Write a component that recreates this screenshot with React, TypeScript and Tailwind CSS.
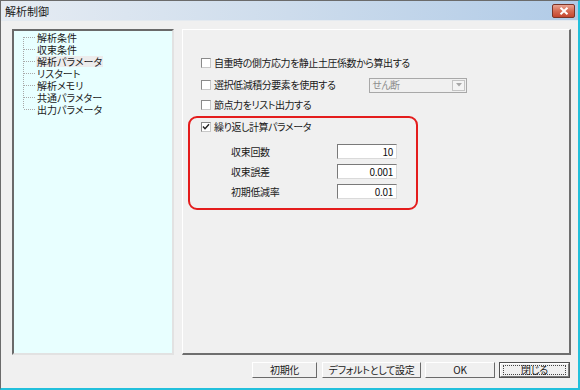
import React from "react";

const font = "[font-family:'Noto_Sans_CJK_JP','Noto_Sans',sans-serif] [font-feature-settings:'palt']";

function CheckBox({ checked = false }: { checked?: boolean }) {
  return (
    <div className="w-[10px] h-[10px] shrink-0 bg-white border border-t-[#8a8a8a] border-l-[#8a8a8a] border-r-[#c8c8c8] border-b-[#c8c8c8] flex items-center justify-center">
      {checked && (
        <svg width="8" height="8" viewBox="0 0 8 8">
          <path d="M1 3.5 L3 5.8 L7 1.2" stroke="#222" strokeWidth="1.4" fill="none" />
        </svg>
      )}
    </div>
  );
}

function TreeRow({ label, first, last, hl }: { label: string; first?: boolean; last?: boolean; hl?: boolean }) {
  return (
    <div className="h-[12px] flex items-center">
      <svg width="22" height="12" viewBox="0 0 22 12" className="shrink-0">
        <line x1="9.5" y1={first ? 6 : 0} x2="9.5" y2={last ? 6 : 12} stroke="#a8a8a8" strokeDasharray="1 1" />
        <line x1="10" y1="6.5" x2="21" y2="6.5" stroke="#a8a8a8" strokeDasharray="1 1" />
      </svg>
      <span className={`px-[1px] h-[11px] leading-[11px] text-[10px] text-[#1a1a1a] ${hl ? "bg-[#ececec]" : ""}`}>{label}</span>
    </div>
  );
}

function Field({ label, value }: { label: string; value: string }) {
  return (
    <div className="flex items-center pl-[41px]">
      <span className="w-[106px] text-[10px] leading-[12px] tracking-[-0.3px] text-[#1a1a1a]">{label}</span>
      <div className="w-[60px] h-[15px] bg-white border border-t-[#7a7a7a] border-l-[#7a7a7a] border-r-[#dadada] border-b-[#dadada] flex items-center justify-end pr-[3px] text-[10px] leading-[12px] tracking-[-0.3px] text-[#111]">
        {value}
      </div>
    </div>
  );
}

function Btn({ label, w, def }: { label: string; w: string; def?: boolean }) {
  return (
    <div
      className={`${w} h-[16px] flex items-center justify-center bg-[#f0f0f0] border ${
        def
          ? "border-[#505050]"
          : "border-t-white border-l-white border-r-[#6a6a6a] border-b-[#6a6a6a]"
      } text-[10px] leading-[12px] tracking-[-0.3px] text-[#1a1a1a]`}
    >
      {def ? (
        <div className="w-full h-full border border-t-white border-l-white border-r-[#7a7a7a] border-b-[#7a7a7a] flex items-center justify-center">
          <div className="w-[calc(100%-4px)] h-[10px] border border-dotted border-[#444] flex items-center justify-center">{label}</div>
        </div>
      ) : (
        label
      )}
    </div>
  );
}

export default function App() {
  return (
    <div className={`w-[580px] h-[390px] flex flex-col bg-[#f0f0f0] border-l border-t border-l-[#6b6b6b] border-t-[#6b6b6b] border-r-2 border-b-2 border-r-[#22c0dc] border-b-[#22c0dc] ${font}`}>
      {/* title bar */}
      <div className="h-[20px] shrink-0 flex items-start justify-between pt-[3px] pr-[3px] bg-gradient-to-r from-[#e6ecf3] via-[#cddcec] to-[#b1cbe7] border-b border-b-[#e4eaf0]">
        <span className="pl-[4px] text-[11px] leading-[14px] text-[#1a1a1a]">解析制御</span>
        <div className="w-[23px] h-[14px] rounded-[2px] border border-[#7a3428] bg-gradient-to-b from-[#e8a493] via-[#d56a53] to-[#c4452e] flex items-center justify-center">
          <svg width="10" height="8" viewBox="0 0 10 8">
            <path d="M1.5 0.8 L8.5 7.2 M8.5 0.8 L1.5 7.2" stroke="#ffffff" strokeWidth="2" />
          </svg>
        </div>
      </div>

      {/* body */}
      <div className="flex-1 flex flex-col pl-[11px] pr-[7px] pt-[8px] pb-[10px]">
        <div className="flex h-[326px] gap-[8px]">
          {/* tree */}
          <div className="w-[162px] h-full bg-[#e8ffff] border-2 border-t-[#6a6a6a] border-l-[#6a6a6a] border-r-[#e2e2e2] border-b-[#e2e2e2]">
            <TreeRow label="解析条件" first />
            <TreeRow label="収束条件" />
            <TreeRow label="解析パラメータ" hl />
            <TreeRow label="リスタート" />
            <TreeRow label="解析メモリ" />
            <TreeRow label="共通パラメター" />
            <TreeRow label="出力パラメータ" last />
          </div>

          {/* right panel */}
          <div className="flex-1 h-full flex flex-col border border-t-white border-l-white border-r-2 border-b-2 border-r-[#6e6e6e] border-b-[#6e6e6e] tracking-[-0.45px]">
            <div className="h-[14px] mt-[26px] ml-[18px] flex items-center gap-[3px]">
              <CheckBox />
              <span className="text-[10px] leading-[12px] text-[#1a1a1a]">自重時の側方応力を静止土圧係数から算出する</span>
            </div>
            <div className="h-[16px] mt-[7px] ml-[18px] flex items-center">
              <div className="w-[168px] flex items-center gap-[3px]">
                <CheckBox />
                <span className="text-[10px] leading-[12px] text-[#1a1a1a]">選択低減積分要素を使用する</span>
              </div>
              <div className="w-[98px] h-[15px] flex items-center border border-[#a8a8a8] bg-[#f0f0f0]">
                <span className="flex-1 pl-[2px] text-[10px] leading-[12px] text-[#8d8d8d]">せん断</span>
                <div className="w-[13px] h-[11px] mr-[1px] border border-[#c4c4c4] bg-[#f4f4f4] flex items-center justify-center">
                  <svg width="6" height="4" viewBox="0 0 6 4">
                    <path d="M0 0 L6 0 L3 3.5 Z" fill="#a8a8a8" />
                  </svg>
                </div>
              </div>
            </div>
            <div className="h-[14px] mt-[5px] ml-[18px] flex items-center gap-[3px]">
              <CheckBox />
              <span className="text-[10px] leading-[12px] text-[#1a1a1a]">節点力をリスト出力する</span>
            </div>

            {/* red box */}
            <div className="mt-[4px] ml-[5px] w-[230px] h-[94px] border-2 border-[#e41c1c] rounded-[9px] pt-[2px]">
              <div className="h-[14px] pl-[11px] flex items-center gap-[3px]">
                <CheckBox checked />
                <span className="text-[10px] leading-[12px] text-[#1a1a1a]">繰り返し計算パラメータ</span>
              </div>
              <div className="mt-[10px] flex flex-col gap-[5px]">
                <Field label="収束回数" value="10" />
                <Field label="収束誤差" value="0.001" />
                <Field label="初期低減率" value="0.01" />
              </div>
            </div>
          </div>
        </div>

        {/* buttons */}
        <div className="mt-[7px] flex justify-end gap-[4px] pr-[1px]">
          <div className="mr-[1px]"><Btn label="初期化" w="w-[65px]" /></div>
          <Btn label="デフォルトとして設定" w="w-[99px]" />
          <Btn label="OK" w="w-[70px]" />
          <Btn label="閉じる" w="w-[71px]" def />
        </div>
      </div>
    </div>
  );
}
